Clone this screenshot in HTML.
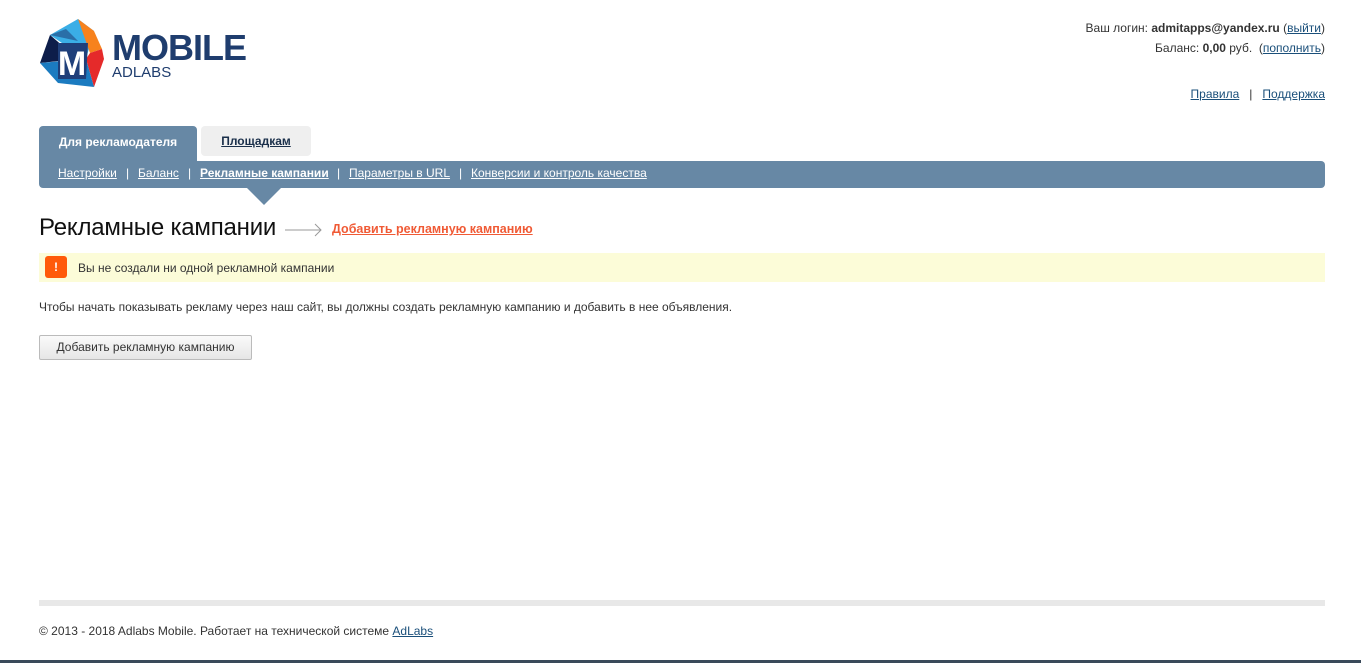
<!DOCTYPE html>
<html><head><meta charset="utf-8"><style>
body{margin:0;width:1361px;height:663px;background:#fff;font-family:"Liberation Sans",Arial,sans-serif;font-size:12px;color:#333;position:relative;overflow:hidden}
a{color:#1a4f7a}
.abs{position:absolute}
.nav a,.nav span{position:absolute;top:0;color:#fff}
</style></head><body>
<svg class="abs" style="left:38px;top:19px" width="72" height="68" viewBox="0 0 72 68">
<polygon points="12,16 40,0 56,12 48,40" fill="#3aaee6"/>
<polygon points="12,16 2,44 40,40" fill="#0d1d4a"/>
<polygon points="40,0 56,12 64,30 52,34" fill="#f7821d"/>
<polygon points="64,30 52,34 48,40 56,68 66,40" fill="#e52a2a"/>
<polygon points="2,44 20,64 56,68 48,40" fill="#1b7bc0"/>
<polygon points="12,16 28,10 40,22" fill="#2a6fa8"/>
<polygon points="20,24 50,24 48,60 20,60" fill="#1f3f7a"/>
<text x="34" y="56" font-family="Liberation Sans" font-weight="bold" font-size="34" fill="#fff" text-anchor="middle">M</text>
</svg>
<div class="abs" style="left:112px;top:30px;font-size:36px;font-weight:bold;color:#1f3d6e;letter-spacing:-1px;line-height:36px">MOBILE</div>
<div class="abs" style="left:112px;top:65px;font-size:15px;color:#1f3d6e;line-height:16px">ADLABS</div>
<div class="abs" style="right:36px;top:18px;text-align:right;line-height:20px">Ваш логин: <b>admitapps@yandex.ru</b> (<a href="#">выйти</a>)<br>Баланс: <b>0,00</b> руб. &nbsp;(<a href="#">пополнить</a>)</div>
<div class="abs" style="right:36px;top:87px"><a href="#">Правила</a> &nbsp; | &nbsp; <a href="#">Поддержка</a></div>
<div class="abs" style="left:39px;top:126px;width:158px;height:40px;background:#6788a5;border-radius:4px 4px 0 0;color:#fff;font-weight:bold;text-align:center;line-height:32px">Для рекламодателя</div>
<div class="abs" style="left:201px;top:126px;width:110px;height:30px;background:#efefef;border-radius:4px;text-align:center;line-height:31px;font-weight:bold"><a href="#" style="color:#1a2f4a">Площадкам</a></div>
<div class="abs nav" style="left:39px;top:161px;width:1286px;height:27px;background:#6788a5;border-radius:0 4px 4px 4px;color:#fff;line-height:24px">
<a href="#" style="left:19px">Настройки</a><span style="left:87px">|</span>
<a href="#" style="left:99px">Баланс</a><span style="left:149px">|</span>
<a href="#" style="left:161px;font-weight:bold">Рекламные кампании</a><span style="left:298px">|</span>
<a href="#" style="left:310px">Параметры в URL</a><span style="left:420px">|</span>
<a href="#" style="left:432px">Конверсии и контроль качества</a></div>
<div class="abs" style="left:247px;top:188px;width:0;height:0;border-left:17px solid transparent;border-right:17px solid transparent;border-top:17px solid #6788a5"></div>
<div class="abs" style="left:39px;top:214px;font-size:24px;color:#111;letter-spacing:-0.2px">Рекламные кампании</div>
<svg class="abs" style="left:285px;top:223px" width="38" height="14"><path d="M0 7H36M30 1L36 7L30 13" stroke="#999" fill="none"/></svg>
<div class="abs" style="left:332px;top:222px;font-size:12.5px;font-weight:bold"><a href="#" style="color:#f05a35">Добавить рекламную кампанию</a></div>
<div class="abs" style="left:39px;top:253px;width:1286px;height:29px;background:#fcfcd8"></div>
<div class="abs" style="left:45px;top:256px;width:22px;height:22px;background:#ff5a0a;border-radius:3px;color:#fff;font-weight:bold;text-align:center;line-height:22px">!</div>
<div class="abs" style="left:78px;top:261px">Вы не создали ни одной рекламной кампании</div>
<div class="abs" style="left:39px;top:300px">Чтобы начать показывать рекламу через наш сайт, вы должны создать рекламную кампанию и добавить в нее объявления.</div>
<div class="abs" style="left:39px;top:335px;width:211px;height:23px;border:1px solid #bbb;background:linear-gradient(#fafafa,#e6e6e6);text-align:center;line-height:23px;border-radius:2px">Добавить рекламную кампанию</div>
<div class="abs" style="left:39px;top:600px;width:1286px;height:6px;background:#e8e8e8"></div>
<div class="abs" style="left:39px;top:624px">© 2013 - 2018 Adlabs Mobile. Работает на технической системе <a href="#">AdLabs</a></div>
<div class="abs" style="left:0;top:660px;width:1361px;height:3px;background:#3a4a5a"></div>
</body></html>
